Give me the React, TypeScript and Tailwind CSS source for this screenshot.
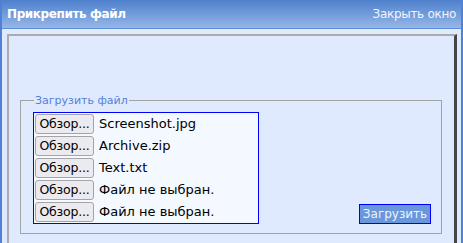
import React from "react";

const files = ["Screenshot.jpg", "Archive.zip", "Text.txt", "Файл не выбран.", "Файл не выбран."];

export default function App() {
  return (
    <div className="w-[463px] h-[243px] overflow-hidden bg-[#dfeaff] border-x-2 border-[#4f82d4] font-['DejaVu_Sans',sans-serif]">
      {/* Title bar */}
      <div className="h-[29px] flex items-center justify-between pl-[5px] pr-[5px] bg-gradient-to-b from-[#4f80cc] to-[#96b6e8] border-b border-[#5d8fdc]">
        <span className="text-[12px] font-bold text-white tracking-[-0.4px]">Прикрепить файл</span>
        <span className="text-[12px] text-[#f0f4ff] tracking-[-0.3px]">Закрыть окно</span>
      </div>

      {/* Frame */}
      <div className="ml-[5px] mt-[5px] w-[450px] h-[230px] border-t-2 border-l-2 border-t-[#acacac] border-l-[#acacac] border-r-[3px] border-r-[#45454d] bg-[#dfeaff] pt-[58px] pl-[11px] pr-[12px]">
        <fieldset className="border border-[#a3a3a3] pl-[12px] pr-[10px] pb-[9px] pt-0">
          <legend className="ml-[1px] px-[1px] text-[11px] text-[#5580d8] leading-[13px]">Загрузить файл</legend>
          <div className="flex items-end justify-between pt-[5px]">
            <div className="w-[226px] border border-[#0000ff] bg-[#f4f8ff] pl-px">
              {files.map((f, i) => (
                <div key={i} className="h-[22px] flex items-center">
                  <button className="w-[59px] h-[20px] rounded-[3px] border border-[#a4a4a8] bg-[#ebebef] text-[12.5px] text-black leading-none tracking-[-0.2px]">
                    Обзор...
                  </button>
                  <span className="ml-[5px] text-[13px] text-black">{f}</span>
                </div>
              ))}
            </div>
            <button className="w-[72px] h-[20px] border border-[#0000ff] bg-[#6897dc] text-[12px] text-[#eef3ff] leading-none">
              Загрузить
            </button>
          </div>
        </fieldset>
      </div>
    </div>
  );
}
